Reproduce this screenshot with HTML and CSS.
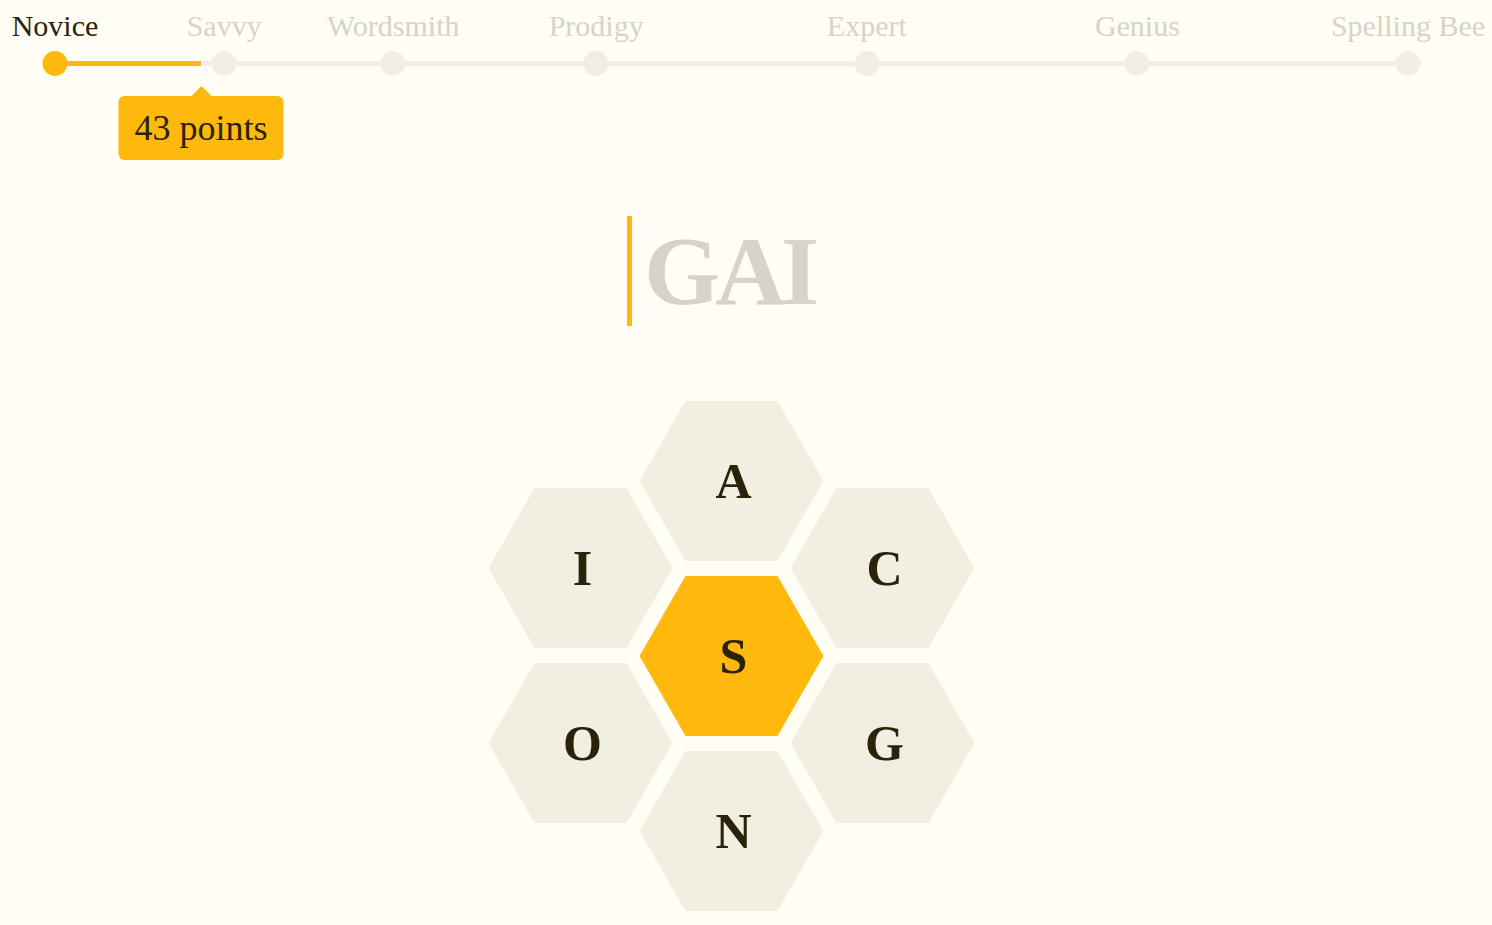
FILE: index.html
```html
<!DOCTYPE html>
<html lang="en">
<head>
<meta charset="utf-8">
<title>Spelling Bee</title>
<link rel="stylesheet" href="styles.css">
</head>
<body>
<header class="ranks">
  <div class="track">
    <div class="track-fill" style="width:10.8%"></div>
    <div class="rank reached" style="left:0%"><span class="rank-label">Novice</span><span class="dot"></span></div>
    <div class="rank" style="left:12.5%"><span class="rank-label">Savvy</span><span class="dot"></span></div>
    <div class="rank" style="left:25%"><span class="rank-label">Wordsmith</span><span class="dot"></span></div>
    <div class="rank" style="left:40%"><span class="rank-label">Prodigy</span><span class="dot"></span></div>
    <div class="rank" style="left:60%"><span class="rank-label">Expert</span><span class="dot"></span></div>
    <div class="rank" style="left:80%"><span class="rank-label">Genius</span><span class="dot"></span></div>
    <div class="rank" style="left:100%"><span class="rank-label">Spelling Bee</span><span class="dot"></span></div>
    <div class="score-tip" style="left:10.8%">43 points</div>
  </div>
</header>

<main class="game">
  <div class="word"><span class="word-text">GAI</span></div>

  <div class="hive">
    <div class="col col-side">
      <div class="hex"><span>I</span></div>
      <div class="hex"><span>O</span></div>
    </div>
    <div class="col">
      <div class="hex"><span>A</span></div>
      <div class="hex center"><span>S</span></div>
      <div class="hex"><span>N</span></div>
    </div>
    <div class="col col-side">
      <div class="hex"><span>C</span></div>
      <div class="hex"><span>G</span></div>
    </div>
  </div>
</main>
</body>
</html>
```

FILE: styles.css
```css
* { box-sizing: border-box; }

html, body {
  margin: 0;
  padding: 0;
}

body {
  background: #fffdf4;
  font-family: "Liberation Serif", "Times New Roman", serif;
  color: #2a2309;
  width: 1492px;
  height: 925px;
  overflow: hidden;
}

/* ---------- rank progress ---------- */
.ranks {
  padding: 61px 84px 0 55px;
}

.track {
  position: relative;
  height: 5px;
  background: #f1efe2;
}

.track-fill {
  position: absolute;
  left: 0;
  top: 0;
  height: 5px;
  background: #ffb90d;
}

.rank {
  position: absolute;
  top: -10px;
  width: 25px;
  height: 25px;
  transform: translateX(-50%);
}

.dot {
  display: block;
  width: 25px;
  height: 25px;
  border-radius: 50%;
  background: #f1efe2;
}

.rank.reached .dot {
  background: #ffb90d;
}

.rank-label {
  position: absolute;
  bottom: calc(100% + 8px);
  left: 50%;
  transform: translateX(-50%);
  white-space: nowrap;
  font-size: 30px;
  line-height: 34px;
  color: #d6d4c9;
}

.rank.reached .rank-label {
  color: #2a2309;
}

.score-tip {
  position: absolute;
  top: 35px;
  transform: translateX(-50%);
  background: #ffb90d;
  border-radius: 6px;
  height: 64px;
  padding: 0 16px;
  font-size: 36px;
  line-height: 64px;
  white-space: nowrap;
  color: #2a2309;
}

.score-tip::before {
  content: "";
  position: absolute;
  left: 50%;
  top: -10px;
  margin-left: -10px;
  border-left: 10px solid transparent;
  border-right: 10px solid transparent;
  border-bottom: 10px solid #ffb90d;
}

/* ---------- game ---------- */
.game {
  display: flex;
  flex-direction: column;
  align-items: center;
  padding-right: 29px;
}

.word {
  margin-top: 150px;
  height: 110px;
  display: flex;
  justify-content: center;
}

.word-text {
  position: relative;
  font-size: 98px;
  line-height: 110px;
  font-weight: 700;
  letter-spacing: -5px;
  color: #d6d4c9;
  margin-left: -5px;
}

.word-text::before {
  content: "";
  position: absolute;
  left: -17px;
  top: 0;
  width: 5px;
  height: 110px;
  background: #ffb90d;
}

.hive {
  margin-top: 75px;
  display: flex;
}

.col {
  display: flex;
  flex-direction: column;
  gap: 15px;
}

.col + .col {
  margin-left: -33px;
}

.col-side {
  padding-top: 87px;
}

.hex {
  width: 184px;
  height: 160px;
  clip-path: polygon(25% 0, 75% 0, 100% 50%, 75% 100%, 25% 100%, 0 50%);
  background: #f1efe2;
  display: flex;
  align-items: center;
  justify-content: center;
  font-size: 50px;
  font-weight: 700;
  color: #2a2309;
}

.hex span {
  margin-left: 4px;
}

.hex.center {
  background: #ffb90d;
}
```
